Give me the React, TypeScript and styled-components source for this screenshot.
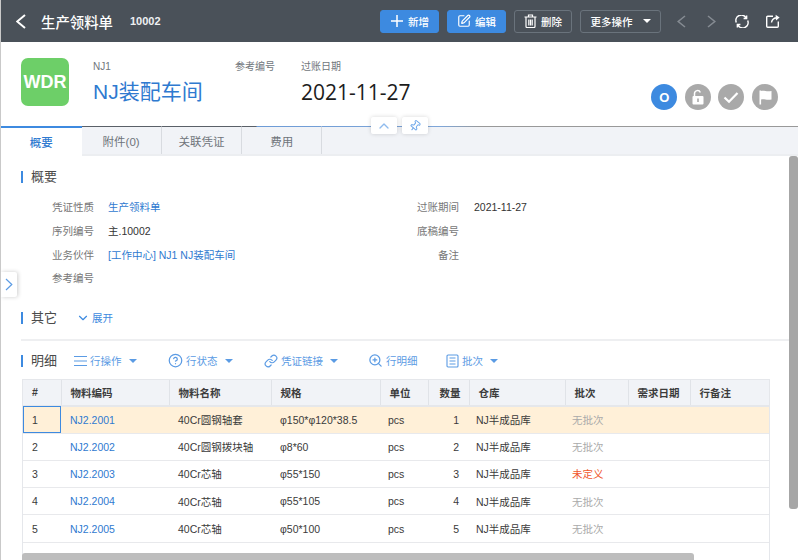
import React from 'react';
import styled, { createGlobalStyle } from 'styled-components';
import { ChevronDown, ChevronUp, SquarePen, CircleHelp, Link, ZoomIn, Pin } from 'lucide-react';

const GlobalStyle = createGlobalStyle`
  html, body { margin: 0; padding: 0; background: #fff; }
  body { font-family: "Liberation Sans", "Noto Sans CJK SC", sans-serif; }
`;

const Page = styled.div`
  position: relative;
  width: 798px;
  height: 560px;
  overflow: hidden;
  display: flex;
  flex-direction: column;
  border-left: 1px solid #c9c9c9;
  box-sizing: border-box;
`;

const Toolbar = styled.div`
  height: 42px;
  flex: none;
  background: #4a5159;
  display: flex;
  align-items: center;
  color: #fff;
`;

const BackButton = styled.div`
  width: 40px;
  padding-left: 15px;
  box-sizing: border-box;
  display: flex;
`;

const ToolbarTitle = styled.span`
  font-size: 14.4px;
  font-weight: 500;
  width: 89px;
`;

const ToolbarNo = styled.span`
  font-size: 11px;
  font-weight: 700;
  width: 250px;
  color: #eef0f2;
`;

const ActionButton = styled.div<{ $primary?: boolean; $width: number }>`
  width: ${(p) => p.$width}px;
  height: 23px;
  box-sizing: border-box;
  margin-right: 8px;
  border-radius: 3px;
  display: flex;
  align-items: center;
  justify-content: center;
  gap: 4px;
  font-size: 10.5px;
  font-weight: 500;
  color: #fff;
  background: ${(p) => (p.$primary ? '#3d8ae0' : 'transparent')};
  border: 1px solid ${(p) => (p.$primary ? '#3d8ae0' : '#6a737c')};
`;

const Caret = styled.span<{ $color?: string; $left?: number }>`
  display: inline-block;
  width: 0;
  height: 0;
  margin-left: ${(p) => p.$left ?? 4}px;
  border-left: 4px solid transparent;
  border-right: 4px solid transparent;
  border-top: 4px solid ${(p) => p.$color ?? '#fff'};
`;

const ToolIcons = styled.div`
  display: flex;
  align-items: center;
  margin-left: 8px;
`;

const ToolIcon = styled.span<{ $left?: number }>`
  display: flex;
  margin-left: ${(p) => p.$left ?? 0}px;
`;

const Summary = styled.div`
  height: 84px;
  flex: none;
  display: flex;
  align-items: flex-start;
  padding-left: 20px;
  box-sizing: border-box;
`;

const Logo = styled.div`
  width: 48px;
  height: 48px;
  margin-top: 16px;
  margin-right: 24px;
  border-radius: 7px;
  background: #6dcf68;
  color: #fff;
  font-size: 18px;
  font-weight: 700;
  display: flex;
  align-items: center;
  justify-content: center;
`;

const SummaryColumn = styled.div<{ $width: number }>`
  width: ${(p) => p.$width}px;
  padding-top: 18px;
`;

const SummaryLabel = styled.div`
  font-size: 10px;
  line-height: 14px;
  color: #70767c;
`;

const PartnerName = styled.div`
  font-size: 21px;
  line-height: 30px;
  margin-top: 3px;
  color: #2f7ad0;
`;

const PostingDate = styled.div`
  font-family: "Open Sans", sans-serif;
  font-size: 21px;
  line-height: 30px;
  margin-top: 3px;
  color: #1c1c1c;
`;

const StatusGroup = styled.div`
  margin-left: auto;
  margin-right: 20px;
  margin-top: 42px;
  display: flex;
  gap: 7.6px;
`;

const StatusDot = styled.div<{ $active?: boolean }>`
  width: 26px;
  height: 26px;
  border-radius: 50%;
  background: ${(p) => (p.$active ? '#3d8ae0' : '#a9a9a9')};
  color: #fff;
  font-size: 13px;
  font-weight: 700;
  display: flex;
  align-items: center;
  justify-content: center;
`;

const TabBar = styled.div`
  height: 30px;
  flex: none;
  display: flex;
  box-sizing: border-box;
  background: #f1f3f7;
  border-bottom: 2px solid #eceef1;
  position: relative;
  &::before {
    content: '';
    position: absolute;
    top: 0;
    left: 0;
    right: 0;
    height: 1px;
    background: linear-gradient(90deg, #5a6068 0, #5a6068 255px, #6d9bd6 256px, #7fa6d8 440px, #999 480px, #999 100%);
  }
`;

const Tab = styled.div<{ $active?: boolean }>`
  width: ${(p) => (p.$active ? 80.5 : 80.3)}px;
  box-sizing: border-box;
  display: flex;
  align-items: center;
  justify-content: center;
  font-size: 11.5px;
  position: relative;
  color: ${(p) => (p.$active ? '#2f7ad0' : '#6f747a')};
  background: ${(p) => (p.$active ? '#fff' : 'transparent')};
  border-right: 1px solid #d8dbe0;
  border-top: 1px solid transparent;
  ${(p) => p.$active && 'border-top: 2px solid #3d8ae0; border-right: none; z-index: 1; font-weight: 500; margin-bottom: -2px;'}
`;

const FloatButton = styled.div<{ $left: number }>`
  position: absolute;
  top: 117px;
  left: ${(p) => p.$left}px;
  width: 26px;
  height: 17px;
  border-radius: 2px;
  background: #fff;
  box-shadow: 0 0 4px rgba(0, 0, 0, 0.16);
  color: #8fbbee;
  display: flex;
  align-items: center;
  justify-content: center;
  z-index: 3;
`;

const TiltedPin = styled(Pin)`
  transform: rotate(40deg);
  color: #6fa8ea;
`;

const SideExpander = styled.div`
  position: absolute;
  left: 0;
  top: 272px;
  width: 16px;
  height: 25px;
  background: #fff;
  border-radius: 0 2px 2px 0;
  box-shadow: 1px 0 4px rgba(0, 0, 0, 0.2);
  padding-left: 4px;
  box-sizing: border-box;
  display: flex;
  align-items: center;
  z-index: 3;
`;

const Content = styled.div`
  flex: 1;
  padding: 14px 0 0 20px;
  min-height: 0;
  display: flex;
  flex-direction: column;
`;

const SectionHead = styled.div<{ $top?: number }>`
  display: flex;
  align-items: center;
  height: 14px;
  flex: none;
  margin-top: ${(p) => p.$top ?? 0}px;
`;

const SectionTitle = styled.div`
  border-left: 2px solid #3d8ae0;
  height: 12px;
  padding-left: 8px;
  font-size: 13px;
  line-height: 12px;
  color: #4a4a4a;
  width: 38px;
  flex: none;
`;

const FieldGrid = styled.div`
  display: grid;
  grid-template-columns: 395px 1fr;
  padding-top: 11px;
  flex: none;
`;

const FieldRow = styled.div`
  display: flex;
  align-items: center;
  height: 23.7px;
  font-size: 10.5px;
`;

const FieldLabel = styled.div<{ $width: number; $gap: number }>`
  width: ${(p) => p.$width}px;
  text-align: right;
  flex: none;
  margin-right: ${(p) => p.$gap}px;
  color: #777;
`;

const FieldValue = styled.div<{ $link?: boolean }>`
  color: ${(p) => (p.$link ? '#2f7ad0' : '#333')};
`;

const Expand = styled.div`
  display: flex;
  align-items: center;
  gap: 2px;
  margin-left: 7px;
  font-size: 10.5px;
  color: #3d8ae0;
`;

const Divider = styled.div`
  height: 2px;
  flex: none;
  background: #eeeff1;
  margin: 14px 0 13px;
`;

const DetailActions = styled.div`
  display: flex;
  align-items: center;
  margin-left: 5px;
`;

const DetailAction = styled.div<{ $width: number }>`
  width: ${(p) => p.$width}px;
  flex: none;
  display: flex;
  align-items: center;
  gap: 3px;
  font-size: 10.5px;
  color: #5b9be4;
`;

const TableWrap = styled.div`
  margin-top: 11px;
  margin-left: 1px;
  width: 748px;
  flex: 1;
  box-sizing: border-box;
  border: 1px solid #e5e7eb;
  border-bottom: none;
`;

const Table = styled.table`
  width: 746px;
  table-layout: fixed;
  border-collapse: collapse;
  font-size: 10.5px;
`;

const Th = styled.th<{ $right?: boolean }>`
  height: 26px;
  padding: 0 8px 0 9px;
  text-align: ${(p) => (p.$right ? 'right' : 'left')};
  font-size: 10.5px;
  font-weight: 700;
  color: #3c3c3c;
  background: #f1f3f7;
  border-right: 1px solid #e0e3e8;
  border-bottom: 2px solid #e5e7eb;
  box-sizing: border-box;
  &:last-child { border-right: none; }
`;

const Tr = styled.tr<{ $selected?: boolean }>`
  background: ${(p) => (p.$selected ? '#fff0d8' : '#fff')};
`;

const Td = styled.td<{ $align?: string; $focused?: boolean; $color?: string; $pad?: number }>`
  height: 27.3px;
  padding: 0 10px 0 ${(p) => p.$pad ?? 9}px;
  box-sizing: border-box;
  text-align: ${(p) => p.$align ?? 'left'};
  color: ${(p) => p.$color ?? '#3a3a3a'};
  border-bottom: 1px solid #e8e9ec;
  white-space: nowrap;
  overflow: hidden;
  ${(p) => p.$focused && 'outline: 1px solid #3d8ae0; outline-offset: -1px;'}
`;

const VScrollThumb = styled.div`
  position: absolute;
  right: 0;
  top: 156px;
  width: 9px;
  height: 353px;
  border-radius: 3px;
  background: #a6a6a6;
`;

const HScrollThumb = styled.div`
  position: absolute;
  left: 21px;
  bottom: 0;
  width: 672px;
  height: 7px;
  border-radius: 3px 3px 0 0;
  background: #bdbdbd;
`;

const columns: [string, number][] = [
  ['#', 38],
  ['物料编码', 108],
  ['物料名称', 102],
  ['规格', 109],
  ['单位', 48],
  ['数量', 41],
  ['仓库', 96],
  ['批次', 63],
  ['需求日期', 62],
  ['行备注', 79],
];

const rows = [
  { code: 'NJ2.2001', name: '40Cr圆钢轴套', spec: 'φ150*φ120*38.5', batch: '无批次' },
  { code: 'NJ2.2002', name: '40Cr圆钢拨块轴', spec: 'φ8*60', batch: '无批次' },
  { code: 'NJ2.2003', name: '40Cr芯轴', spec: 'φ55*150', batch: '未定义' },
  { code: 'NJ2.2004', name: '40Cr芯轴', spec: 'φ55*105', batch: '无批次' },
  { code: 'NJ2.2005', name: '40Cr芯轴', spec: 'φ50*100', batch: '无批次' },
];

const Chevron: React.FC<{ left?: boolean; w: number; h: number; color: string; stroke?: number }> = ({ left, w, h, color, stroke = 1.6 }) => (
  <svg width={w} height={h} viewBox={`0 0 ${w} ${h}`} fill="none" stroke={color} strokeWidth={stroke}>
    <path d={left ? `M${w - 1} 1 L1.2 ${h / 2} L${w - 1} ${h - 1}` : `M1 1 L${w - 1.2} ${h / 2} L1 ${h - 1}`} />
  </svg>
);

const PlusIcon = () => (
  <svg width="14" height="14" viewBox="0 0 14 14" fill="none" stroke="#fff" strokeWidth="1.5">
    <path d="M7 1v12M1 7h12" />
  </svg>
);

const TrashIcon = () => (
  <svg width="13" height="14" viewBox="0 0 13 14" fill="none" stroke="#fff" strokeWidth="1.2">
    <path d="M0.5 3h12M4.5 3V1h4v2M2 3v9.5a1 1 0 0 0 1 1h7a1 1 0 0 0 1-1V3M4.8 5.5v6M6.5 5.5v6M8.2 5.5v6" />
  </svg>
);

const RefreshIcon = () => (
  <svg width="14" height="13" viewBox="0 0 14 13" fill="none" stroke="#fff" strokeWidth="1.5">
    <path d="M1.3 7.5A5.4 5.4 0 0 1 11 2.8" />
    <path d="M12.7 5.5A5.4 5.4 0 0 1 3 10.2" />
    <path d="M11.6 0.4v3h-3M2.4 12.6v-3h3" />
  </svg>
);

const ShareIcon = () => (
  <svg width="14" height="14" viewBox="0 0 14 14" fill="none" stroke="#fff" strokeWidth="1.4">
    <path d="M7 2.2H1.7a1 1 0 0 0-1 1v9.1a1 1 0 0 0 1 1h9.6a1 1 0 0 0 1-1V7.5" />
    <path d="M5.5 8.5c.4-2.6 2.4-4.4 5-4.8" />
    <path d="M9.6 0.8 13.6 3.4 10 6.4Z" fill="#fff" stroke="none" />
  </svg>
);

const LockIcon = () => (
  <svg width="14" height="16" viewBox="0 0 14 16">
    <path d="M3.5 8V4.5a3 3 0 0 1 5.8-1" fill="none" stroke="#fff" strokeWidth="1.5" />
    <rect x="1.5" y="7" width="11" height="8.5" rx="1" fill="#fff" />
    <rect x="6.2" y="9.5" width="1.6" height="3.5" fill="#a9a9a9" />
  </svg>
);

const CheckIcon = () => (
  <svg width="16" height="13" viewBox="0 0 16 13" fill="none" stroke="#fff" strokeWidth="2.2">
    <path d="M1.5 6.5 6 10.8 14.5 2" />
  </svg>
);

const FlagIcon = () => (
  <svg width="13" height="15" viewBox="0 0 13 15" fill="#fff">
    <rect x="0.5" y="0.5" width="1.6" height="14" />
    <path d="M2 1c3-1.2 5 1 10.5 0v8.5C7 10.5 5 8.3 2 9.5Z" />
  </svg>
);

const LinesIcon = () => (
  <svg width="13" height="12" viewBox="0 0 13 12" fill="none" stroke="#5b9be4" strokeWidth="1.1">
    <path d="M0 1.5h13M0 6h13M0 10.5h13" />
  </svg>
);

const BatchIcon = () => (
  <svg width="13" height="14" viewBox="0 0 13 14" fill="none" stroke="#5b9be4" strokeWidth="1.1">
    <rect x="1" y="1" width="11" height="12" rx="1" />
    <path d="M3.5 4h6M3.5 7h6M3.5 10h6" />
  </svg>
);

const App: React.FC = () => {
  return (
    <Page>
      <GlobalStyle />
      <Toolbar>
        <BackButton>
          <Chevron left w={10} h={15} color="#fff" stroke={2} />
        </BackButton>
        <ToolbarTitle>生产领料单</ToolbarTitle>
        <ToolbarNo>10002</ToolbarNo>
        <ActionButton $primary $width={59}>
          <PlusIcon />
          新增
        </ActionButton>
        <ActionButton $primary $width={59}>
          <SquarePen size={14} />
          编辑
        </ActionButton>
        <ActionButton $width={58}>
          <TrashIcon />
          删除
        </ActionButton>
        <ActionButton $width={81}>
          更多操作
          <Caret $left={6} />
        </ActionButton>
        <ToolIcons>
          <ToolIcon><Chevron left w={9} h={13} color="#858b92" /></ToolIcon>
          <ToolIcon $left={21}><Chevron w={9} h={13} color="#858b92" /></ToolIcon>
          <ToolIcon $left={19}><RefreshIcon /></ToolIcon>
          <ToolIcon $left={17}><ShareIcon /></ToolIcon>
        </ToolIcons>
      </Toolbar>

      <Summary>
        <Logo>WDR</Logo>
        <SummaryColumn $width={142}>
          <SummaryLabel>NJ1</SummaryLabel>
          <PartnerName>NJ装配车间</PartnerName>
        </SummaryColumn>
        <SummaryColumn $width={66}>
          <SummaryLabel>参考编号</SummaryLabel>
        </SummaryColumn>
        <SummaryColumn $width={120}>
          <SummaryLabel>过账日期</SummaryLabel>
          <PostingDate>2021-11-27</PostingDate>
        </SummaryColumn>
        <StatusGroup>
          <StatusDot $active>O</StatusDot>
          <StatusDot><LockIcon /></StatusDot>
          <StatusDot><CheckIcon /></StatusDot>
          <StatusDot><FlagIcon /></StatusDot>
        </StatusGroup>
      </Summary>

      <TabBar>
        <Tab $active>概要</Tab>
        <Tab>附件(0)</Tab>
        <Tab>关联凭证</Tab>
        <Tab>费用</Tab>
      </TabBar>
      <FloatButton $left={370}><ChevronUp size={16} /></FloatButton>
      <FloatButton $left={401}><TiltedPin size={12} /></FloatButton>
      <SideExpander><Chevron w={8} h={13} color="#5b9be4" stroke={1.2} /></SideExpander>

      <Content>
        <SectionHead>
          <SectionTitle>概要</SectionTitle>
        </SectionHead>
        <FieldGrid>
          <div>
            <FieldRow><FieldLabel $width={73} $gap={14}>凭证性质</FieldLabel><FieldValue $link>生产领料单</FieldValue></FieldRow>
            <FieldRow><FieldLabel $width={73} $gap={14}>序列编号</FieldLabel><FieldValue>主.10002</FieldValue></FieldRow>
            <FieldRow><FieldLabel $width={73} $gap={14}>业务伙伴</FieldLabel><FieldValue $link>[工作中心] NJ1 NJ装配车间</FieldValue></FieldRow>
            <FieldRow><FieldLabel $width={73} $gap={14}>参考编号</FieldLabel></FieldRow>
          </div>
          <div>
            <FieldRow><FieldLabel $width={43} $gap={15}>过账期间</FieldLabel><FieldValue>2021-11-27</FieldValue></FieldRow>
            <FieldRow><FieldLabel $width={43} $gap={15}>底稿编号</FieldLabel></FieldRow>
            <FieldRow><FieldLabel $width={43} $gap={15}>备注</FieldLabel></FieldRow>
          </div>
        </FieldGrid>
        <SectionHead $top={21}>
          <SectionTitle>其它</SectionTitle>
          <Expand><ChevronDown size={14} />展开</Expand>
        </SectionHead>
        <Divider />
        <SectionHead>
          <SectionTitle>明细</SectionTitle>
          <DetailActions>
            <DetailAction $width={94}><LinesIcon />行操作<Caret $color="#5b9be4" /></DetailAction>
            <DetailAction $width={96}><CircleHelp size={15} />行状态<Caret $color="#5b9be4" /></DetailAction>
            <DetailAction $width={104}><Link size={14} />凭证链接<Caret $color="#5b9be4" /></DetailAction>
            <DetailAction $width={78}><ZoomIn size={15} />行明细</DetailAction>
            <DetailAction $width={70}><BatchIcon />批次<Caret $color="#5b9be4" /></DetailAction>
          </DetailActions>
        </SectionHead>
        <TableWrap>
          <Table>
            <colgroup>
              {columns.map(([name, width]) => (
                <col key={name} width={width} />
              ))}
            </colgroup>
            <thead>
              <tr>
                {columns.map(([name]) => (
                  <Th key={name} $right={name === '数量'}>{name}</Th>
                ))}
              </tr>
            </thead>
            <tbody>
              {rows.map((row, i) => (
                <Tr key={row.code} $selected={i === 0}>
                  <Td $focused={i === 0}>{i + 1}</Td>
                  <Td $color="#2f7ad0">{row.code}</Td>
                  <Td>{row.name}</Td>
                  <Td>{row.spec}</Td>
                  <Td $pad={8}>pcs</Td>
                  <Td $align="right">{i + 1}</Td>
                  <Td $pad={7}>NJ半成品库</Td>
                  <Td $pad={7} $color={row.batch === '未定义' ? '#f0562b' : '#aaa'}>{row.batch}</Td>
                  <Td />
                  <Td />
                </Tr>
              ))}
            </tbody>
          </Table>
        </TableWrap>
      </Content>
      <VScrollThumb />
      <HScrollThumb />
    </Page>
  );
};

export default App;
